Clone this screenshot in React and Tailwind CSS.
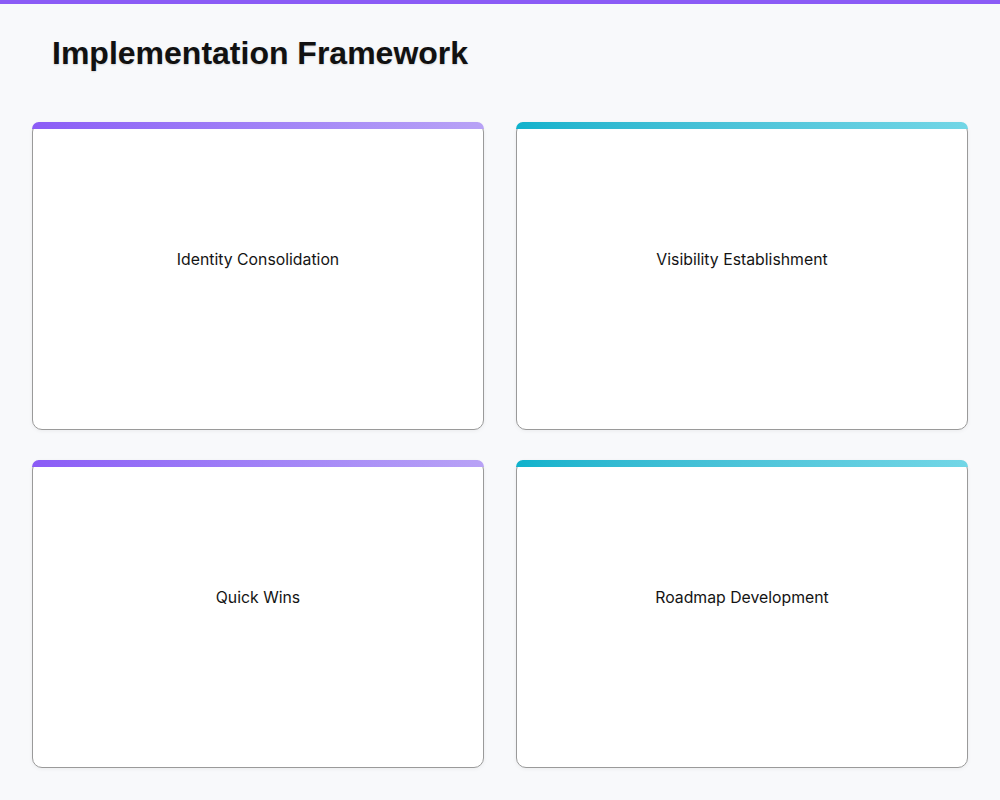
import React from 'react';

const phases = [
  { title: 'Identity Consolidation', accent: 'purple' },
  { title: 'Visibility Establishment', accent: 'cyan' },
  { title: 'Quick Wins', accent: 'purple' },
  { title: 'Roadmap Development', accent: 'cyan' },
];

const PhaseCard = ({ title, accent }) => (
  <div className="relative flex h-[308px] items-center justify-center rounded-[10px] border border-[#9a9a9a] bg-white pb-8 shadow-[0_1px_4px_rgba(0,0,0,0.06)]">
    {/* gradient strip over the top edge */}
    <div
      className={
        accent === 'purple'
          ? 'absolute -top-px -left-px -right-px h-[7px] rounded-t-[10px] bg-gradient-to-r from-[#8b5cf6] to-[#b8a2f6]'
          : 'absolute -top-px -left-px -right-px h-[7px] rounded-t-[10px] bg-gradient-to-r from-[#0eb2cc] to-[#72d6e6]'
      }
    />
    <span className="font-['Inter',sans-serif] text-[15.8px] text-[#141414]">{title}</span>
  </div>
);

export default function App() {
  return (
    <div className="min-h-[800px] border-t-4 border-[#8b5cf6] bg-[#f8f9fb]">
      <h1 className="px-[52px] pt-[31px] pb-[50px] font-['Liberation_Sans',Arial,sans-serif] text-[32px] font-bold leading-[37px] text-[#111] [text-shadow:0_1px_2px_rgba(0,0,0,0.15)]">
        Implementation Framework
      </h1>
      <div className="grid grid-cols-2 gap-x-8 gap-y-[30px] px-8">
        {phases.map((p) => (
          <PhaseCard key={p.title} {...p} />
        ))}
      </div>
    </div>
  );
}
